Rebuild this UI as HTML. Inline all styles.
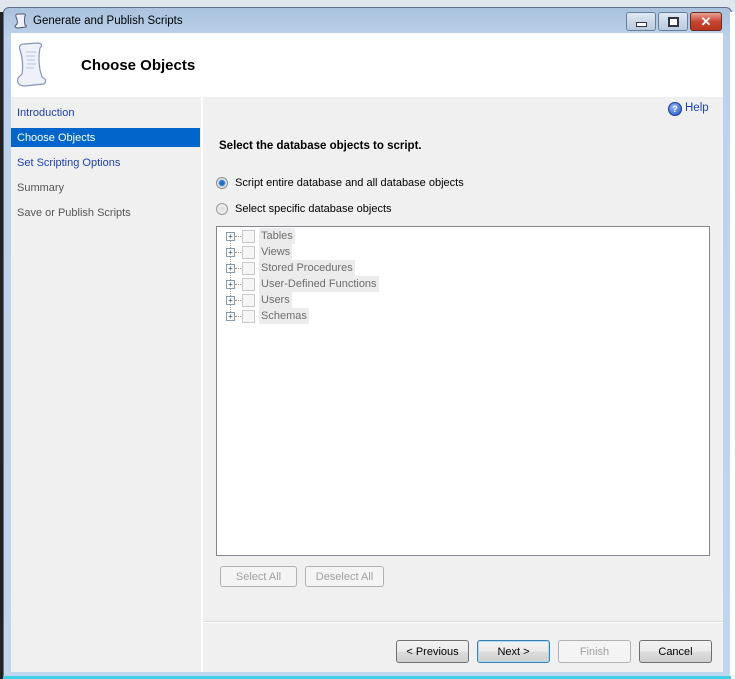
<!DOCTYPE html><html><head><style>
body{margin:0;width:735px;height:679px;position:relative;overflow:hidden;background:#fff;font-family:"Liberation Sans",sans-serif;font-size:11px}
.a{position:absolute;white-space:nowrap}
.btn{position:absolute;height:21px;border:1px solid #707070;border-radius:3px;background:linear-gradient(#f2f2f2,#ebebeb 50%,#dddddd 51%,#cfcfcf);text-align:center;line-height:22px;font-size:11px;color:#000}
.dis{border-color:#adb2b5;background:#f4f4f4;color:#a0a0a0}
.tree div{position:absolute;left:0;height:16px;width:300px;white-space:nowrap}
.cb{position:absolute;left:25px;top:2px;width:11px;height:11px;border:1px solid #c8c8c8;background:#f6f6f6}
.pl{position:absolute;left:9px;top:4px;width:7px;height:7px;border:1px solid #8a9ab0;background:#fff;font-size:8px;line-height:7px;text-align:center;color:#345}
.dl{position:absolute;left:18px;top:8px;width:6px;border-top:1px dotted #999}
.lb{position:absolute;left:42px;top:0;background:#ececec;color:#6d6d6d;padding:0 2px;line-height:16px;height:16px}
</style></head><body>
<div class="a" style="left:0;top:0;width:735px;height:12px;background:#dfe6ee"></div>
<div class="a" style="left:0;top:12px;width:3px;height:667px;background:#222"></div>
<div class="a" style="left:3px;top:7px;width:727px;height:670px;background:linear-gradient(#a9c2dd,#bcd2ec 30px,#c0d5ee);border:1px solid #5f7088;border-radius:6px 6px 0 0"></div>
<div class="a" style="left:730px;top:12px;width:5px;height:667px;background:#fff"></div>
<div class="a" style="left:3px;top:676px;width:728px;height:3px;background:#3fd0e8"></div>
<svg class="a" style="left:14px;top:13px" width="14" height="16" viewBox="0 0 14 16"><path d="M4 1Q1 1 2 4Q4 8 3 11L1 13Q1 15 4 15L12 14Q13 12 11 12Q10 7 11 3Q12 1 10 1Z" fill="#eef1fa" stroke="#556"/></svg>
<div class="a" style="left:33px;top:15px;font-size:11.5px;color:#000">Generate and Publish Scripts</div>
<div class="a" style="left:626px;top:12px;width:28px;height:17px;border:1px solid #6a7e98;border-radius:3px;background:linear-gradient(#dfe8f3,#b9c9dd)"><div class="a" style="left:9px;top:9px;width:9px;height:3px;background:#fff;border:1px solid #334"></div></div>
<div class="a" style="left:658px;top:12px;width:28px;height:17px;border:1px solid #6a7e98;border-radius:3px;background:linear-gradient(#dfe8f3,#b9c9dd)"><div class="a" style="left:9px;top:4px;width:7px;height:6px;border:2px solid #334;background:#fff"></div></div>
<div class="a" style="left:690px;top:12px;width:30px;height:17px;border:1px solid #6b2a20;border-radius:3px;background:linear-gradient(#e8a396,#c8452f 50%,#b83420);color:#fff;font-weight:bold;font-size:13px;text-align:center;line-height:17px">✕</div>
<div class="a" style="left:11px;top:33px;width:712px;height:639px;background:#f0f0f0"></div>
<div class="a" style="left:11px;top:33px;width:712px;height:64px;background:#fff"></div>
<svg class="a" style="left:14px;top:40px" width="34" height="48" viewBox="0 0 34 48"><path d="M10 4 Q4 4 6 10 Q10 22 8 34 L4 38 Q2 45 10 46 L30 44 Q34 40 28 37 L26 30 Q24 18 26 8 Q30 4 24 3 Z" fill="#eef1fa" stroke="#8795b8" stroke-width="1.2"/><path d="M12 12h10M12 16h9M13 20h8M13 24h9M12 28h8" stroke="#b8c2da"/></svg>
<div class="a" style="left:81px;top:57px;font-size:15px;font-weight:bold">Choose Objects</div>
<div class="a" style="left:201px;top:97px;width:2px;height:575px;background:#fff"></div>
<div class="a" style="left:11px;top:128px;width:189px;height:19px;background:#0066cc"></div>
<div class="a" style="left:17px;top:107px;color:#1a3fb0">Introduction</div>
<div class="a" style="left:17px;top:132px;color:#fff">Choose Objects</div>
<div class="a" style="left:17px;top:157px;color:#1a3fb0">Set Scripting Options</div>
<div class="a" style="left:17px;top:182px;color:#555">Summary</div>
<div class="a" style="left:17px;top:207px;color:#555">Save or Publish Scripts</div>
<div class="a" style="left:668px;top:102px;width:12px;height:12px;border-radius:50%;background:radial-gradient(circle at 40% 35%,#8fb8ff,#1d4fc0);color:#fff;font-size:9px;font-weight:bold;text-align:center;line-height:12px;border:1px solid #1b3f90">?</div>
<div class="a" style="left:685px;top:102px;color:#1a3fb0;font-size:11.5px">Help</div>
<div class="a" style="left:219px;top:140px;font-weight:bold;font-size:11.5px">Select the database objects to script.</div>
<div class="a" style="left:216px;top:177px;width:10px;height:10px;border-radius:50%;border:1px solid #888;background:radial-gradient(circle,#1f6fc0 0 2px,#5aa0e0 3px,#eee 4px)"></div>
<div class="a" style="left:235px;top:177px">Script entire database and all database objects</div>
<div class="a" style="left:216px;top:203px;width:10px;height:10px;border-radius:50%;border:1px solid #999;background:radial-gradient(circle,#ddd,#f8f8f8)"></div>
<div class="a" style="left:235px;top:203px">Select specific database objects</div>
<div class="a" style="left:216px;top:226px;width:492px;height:328px;background:#fff;border:1px solid #828790"></div>
<div class="a" style="left:230px;top:236px;height:80px;border-left:1px dotted #999"></div>
<div class="a tree" style="left:217px;top:228px;width:300px;height:100px">
<div style="top:0"><span class="dl"></span><span class="pl">+</span><span class="cb"></span><span class="lb">Tables</span></div>
<div style="top:16px"><span class="dl"></span><span class="pl">+</span><span class="cb"></span><span class="lb">Views</span></div>
<div style="top:32px"><span class="dl"></span><span class="pl">+</span><span class="cb"></span><span class="lb">Stored Procedures</span></div>
<div style="top:48px"><span class="dl"></span><span class="pl">+</span><span class="cb"></span><span class="lb">User-Defined Functions</span></div>
<div style="top:64px"><span class="dl"></span><span class="pl">+</span><span class="cb"></span><span class="lb">Users</span></div>
<div style="top:80px"><span class="dl"></span><span class="pl">+</span><span class="cb"></span><span class="lb">Schemas</span></div>
</div>
<div class="btn dis" style="left:220px;top:566px;width:75px;height:19px;line-height:20px">Select All</div>
<div class="btn dis" style="left:305px;top:566px;width:77px;height:19px;line-height:20px">Deselect All</div>
<div class="a" style="left:203px;top:622px;width:520px;height:1px;background:#fff"></div>
<div class="a" style="left:203px;top:621px;width:520px;height:1px;background:#dcdcdc"></div>
<div class="btn" style="left:396px;top:640px;width:71px">&lt; Previous</div>
<div class="btn" style="left:477px;top:640px;width:71px;border-color:#3c7fb1;box-shadow:inset 0 0 0 1px #a8dcf8">Next &gt;</div>
<div class="btn dis" style="left:558px;top:640px;width:71px">Finish</div>
<div class="btn" style="left:639px;top:640px;width:71px">Cancel</div>
</body></html>
